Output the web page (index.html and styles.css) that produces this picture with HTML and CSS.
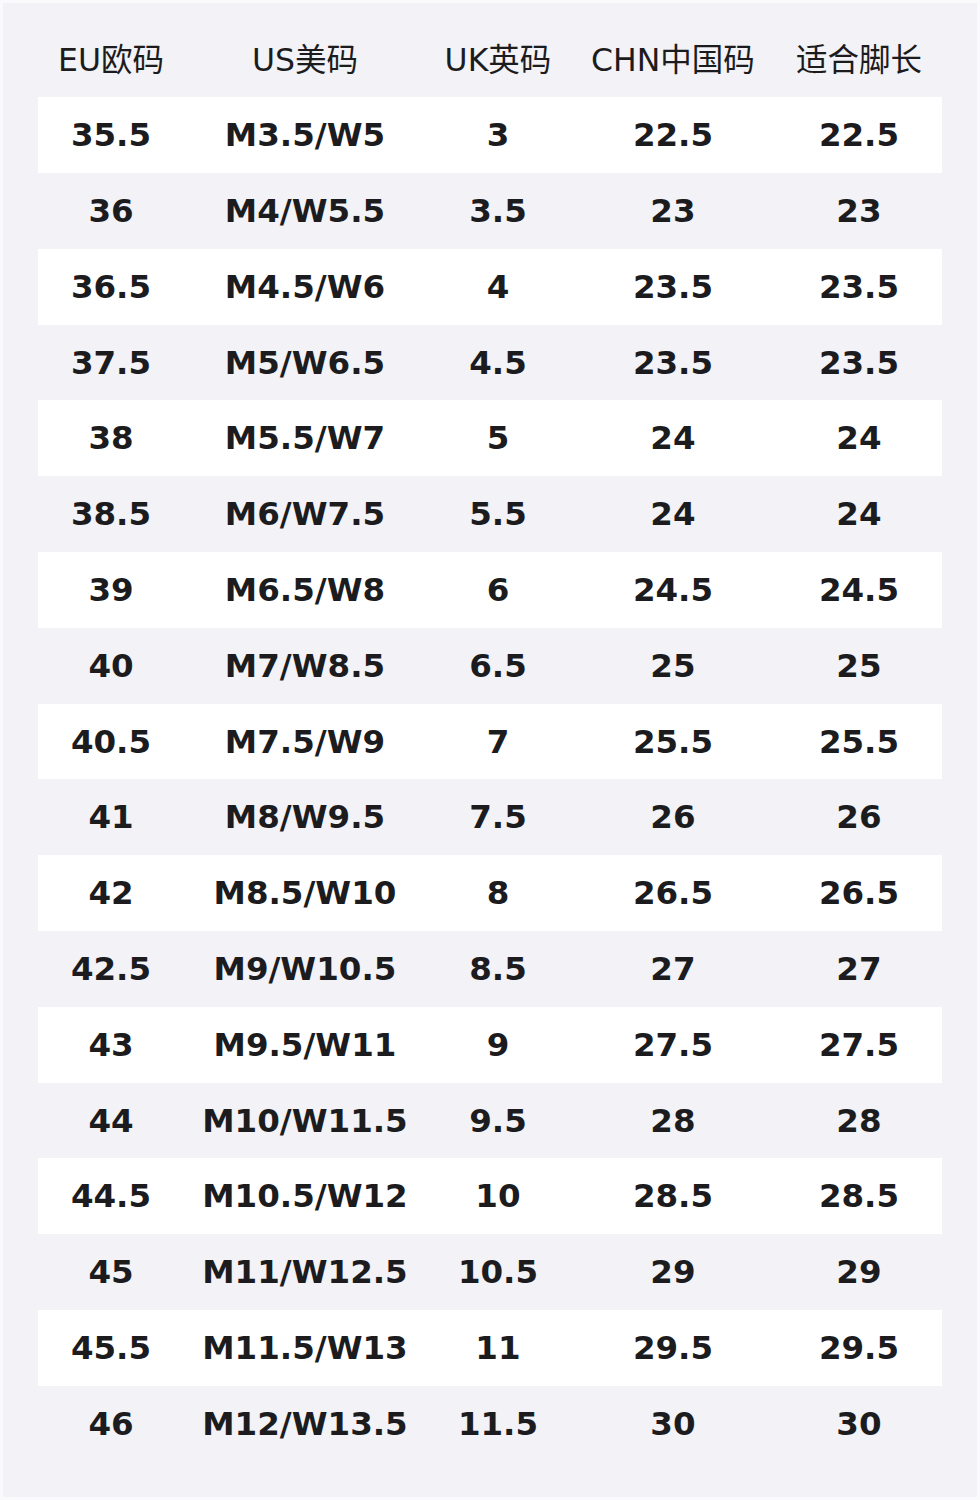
FILE: index.html
```html
<!DOCTYPE html>
<html lang="zh-CN">
<head>
<meta charset="utf-8">
<title>尺码对照表</title>
<link rel="stylesheet" href="styles.css">
</head>
<body>
<div class="sheet">
  <div class="row head">
    <div class="cell">EU欧码</div>
    <div class="cell">US美码</div>
    <div class="cell">UK英码</div>
    <div class="cell">CHN中国码</div>
    <div class="cell">适合脚长</div>
  </div>
  <div class="table">
    <div class="row light"><div class="cell">35.5</div><div class="cell">M3.5/W5</div><div class="cell">3</div><div class="cell">22.5</div><div class="cell">22.5</div></div>
    <div class="row"><div class="cell">36</div><div class="cell">M4/W5.5</div><div class="cell">3.5</div><div class="cell">23</div><div class="cell">23</div></div>
    <div class="row light"><div class="cell">36.5</div><div class="cell">M4.5/W6</div><div class="cell">4</div><div class="cell">23.5</div><div class="cell">23.5</div></div>
    <div class="row"><div class="cell">37.5</div><div class="cell">M5/W6.5</div><div class="cell">4.5</div><div class="cell">23.5</div><div class="cell">23.5</div></div>
    <div class="row light"><div class="cell">38</div><div class="cell">M5.5/W7</div><div class="cell">5</div><div class="cell">24</div><div class="cell">24</div></div>
    <div class="row"><div class="cell">38.5</div><div class="cell">M6/W7.5</div><div class="cell">5.5</div><div class="cell">24</div><div class="cell">24</div></div>
    <div class="row light"><div class="cell">39</div><div class="cell">M6.5/W8</div><div class="cell">6</div><div class="cell">24.5</div><div class="cell">24.5</div></div>
    <div class="row"><div class="cell">40</div><div class="cell">M7/W8.5</div><div class="cell">6.5</div><div class="cell">25</div><div class="cell">25</div></div>
    <div class="row light"><div class="cell">40.5</div><div class="cell">M7.5/W9</div><div class="cell">7</div><div class="cell">25.5</div><div class="cell">25.5</div></div>
    <div class="row"><div class="cell">41</div><div class="cell">M8/W9.5</div><div class="cell">7.5</div><div class="cell">26</div><div class="cell">26</div></div>
    <div class="row light"><div class="cell">42</div><div class="cell">M8.5/W10</div><div class="cell">8</div><div class="cell">26.5</div><div class="cell">26.5</div></div>
    <div class="row"><div class="cell">42.5</div><div class="cell">M9/W10.5</div><div class="cell">8.5</div><div class="cell">27</div><div class="cell">27</div></div>
    <div class="row light"><div class="cell">43</div><div class="cell">M9.5/W11</div><div class="cell">9</div><div class="cell">27.5</div><div class="cell">27.5</div></div>
    <div class="row"><div class="cell">44</div><div class="cell">M10/W11.5</div><div class="cell">9.5</div><div class="cell">28</div><div class="cell">28</div></div>
    <div class="row light"><div class="cell">44.5</div><div class="cell">M10.5/W12</div><div class="cell">10</div><div class="cell">28.5</div><div class="cell">28.5</div></div>
    <div class="row"><div class="cell">45</div><div class="cell">M11/W12.5</div><div class="cell">10.5</div><div class="cell">29</div><div class="cell">29</div></div>
    <div class="row light"><div class="cell">45.5</div><div class="cell">M11.5/W13</div><div class="cell">11</div><div class="cell">29.5</div><div class="cell">29.5</div></div>
    <div class="row"><div class="cell">46</div><div class="cell">M12/W13.5</div><div class="cell">11.5</div><div class="cell">30</div><div class="cell">30</div></div>
  </div>
</div>
</body>
</html>
```

FILE: styles.css
```css
html, body {
  margin: 0;
  padding: 0;
  background: #fafafc;
}

.sheet {
  margin: 3px;
  height: 1494px;
  box-sizing: border-box;
  background: #f2f2f7;
  padding: 0 35.3px;
  color: #1c1c1e;
  font-family: "DejaVu Sans", "Noto Sans CJK SC", sans-serif;
}

.row {
  display: grid;
  grid-template-columns: 145.4px 242.6px 143.4px 206.6px 1fr;
  align-items: center;
}

.cell {
  text-align: center;
  white-space: nowrap;
}

.head {
  height: 94.3px;
  box-sizing: border-box;
  padding-top: 20px;
  font-size: 31.5px;
  line-height: 40px;
  font-weight: normal;
}

.table .row {
  height: 75.8px;
  font-size: 32.5px;
  font-weight: bold;
  line-height: 40px;
}

.table .row.light {
  background: #ffffff;
}
```
